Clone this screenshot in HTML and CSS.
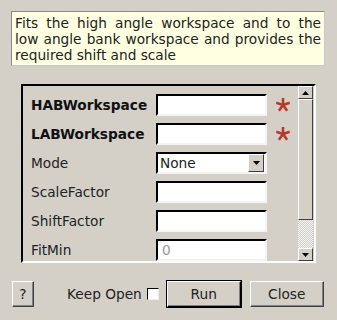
FILE: index.html
```html
<!DOCTYPE html>
<html lang="en">
<head>
    <meta charset="UTF-8">
    <title>Fit workspaces</title>
    <link rel="stylesheet" href="styles.css">
</head>
<body>
    <div class="dialog">
        <div class="description">Fits the high angle workspace and to the low angle bank workspace and provides the required shift and scale</div>

        <div class="props">
            <div class="rows">
                <label class="name req">HABWorkspace</label>
                <input class="field" type="text">
                <span class="star"><svg width="16" height="16" viewBox="0 0 16 16"><g stroke="#b8382b" stroke-width="2.6"><line x1="8" y1="8" x2="8" y2="1"/><line x1="8" y1="8" x2="14.7" y2="5.8"/><line x1="8" y1="8" x2="12.1" y2="13.7"/><line x1="8" y1="8" x2="3.9" y2="13.7"/><line x1="8" y1="8" x2="1.3" y2="5.8"/></g></svg></span>

                <label class="name req">LABWorkspace</label>
                <input class="field" type="text">
                <span class="star"><svg width="16" height="16" viewBox="0 0 16 16"><g stroke="#b8382b" stroke-width="2.6"><line x1="8" y1="8" x2="8" y2="1"/><line x1="8" y1="8" x2="14.7" y2="5.8"/><line x1="8" y1="8" x2="12.1" y2="13.7"/><line x1="8" y1="8" x2="3.9" y2="13.7"/><line x1="8" y1="8" x2="1.3" y2="5.8"/></g></svg></span>

                <label class="name">Mode</label>
                <div class="combo">
                    <span class="combo-text">None</span>
                    <span class="combo-btn"><svg width="7" height="4" viewBox="0 0 7 4"><polygon points="0,0 7,0 3.5,4" fill="#000"/></svg></span>
                </div>
                <span></span>

                <label class="name">ScaleFactor</label>
                <input class="field" type="text">
                <span></span>

                <label class="name">ShiftFactor</label>
                <input class="field" type="text">
                <span></span>

                <label class="name">FitMin</label>
                <input class="field" type="text" placeholder="0">
                <span></span>
            </div>

            <div class="scrollbar">
                <div class="sb-btn"><svg width="7" height="4" viewBox="0 0 7 4"><polygon points="3.5,0 7,4 0,4" fill="#000"/></svg></div>
                <div class="sb-thumb"></div>
                <div class="sb-track"></div>
                <div class="sb-btn"><svg width="7" height="4" viewBox="0 0 7 4"><polygon points="0,0 7,0 3.5,4" fill="#000"/></svg></div>
            </div>
        </div>

        <div class="buttons">
            <button class="btn help">?</button>
            <label class="keep">Keep Open <span class="check"></span></label>
            <button class="btn run">Run</button>
            <button class="btn close">Close</button>
        </div>
    </div>
</body>
</html>
```

FILE: styles.css
```css
body {
    margin: 0;
    background-color: #d4d0c8;
    font-family: "DejaVu Sans", sans-serif;
    font-size: 13.7px;
    color: #222;
}

.dialog {
    width: 337px;
    height: 320px;
    padding-top: 11px;
    box-sizing: border-box;
}

.description {
    margin-left: 11px;
    width: 314px;
    height: 55px;
    box-sizing: border-box;
    padding: 3px 3px 0 3px;
    background-color: #ffffe1;
    border: 1px solid #8a8a8a;
    border-right-color: #c8c8c8;
    border-bottom-color: #c8c8c8;
    line-height: 16px;
    text-align: justify;
}

.props {
    display: flex;
    margin: 18px 0 0 21px;
    width: 295px;
    height: 179px;
    box-sizing: border-box;
    border: 2px solid;
    border-color: #000 #fff #fff #000;
    overflow: hidden;
}

.rows {
    flex: 1;
    display: grid;
    grid-template-columns: 125px 111px 1fr;
    grid-auto-rows: 22px;
    row-gap: 7px;
    align-items: center;
    padding: 8px 0 0 8px;
}

.name {
    line-height: 22px;
}

.name.req {
    font-weight: bold;
    color: #111;
}

.field {
    width: 111px;
    height: 22px;
    box-sizing: border-box;
    margin: 0;
    padding: 0 4px;
    border: 2px solid;
    border-color: #000 #f4f4f4 #f4f4f4 #000;
    background-color: #fff;
    font-family: "DejaVu Sans", sans-serif;
    font-size: 13.7px;
}

.field::placeholder {
    color: #999;
}

.star {
    display: flex;
    padding-left: 8px;
}

.combo {
    display: flex;
    align-items: center;
    height: 22px;
    box-sizing: border-box;
    border: 2px solid;
    border-color: #000 #f4f4f4 #f4f4f4 #000;
    background-color: #fff;
}

.combo-text {
    flex: 1;
    padding-left: 2px;
}

.combo-btn {
    display: flex;
    align-items: center;
    justify-content: center;
    width: 14px;
    height: 16px;
    margin-right: 1px;
    background-color: #d4d0c8;
    border: 1px solid;
    border-color: #fff #404040 #404040 #fff;
}

.scrollbar {
    display: flex;
    flex-direction: column;
    width: 15px;
    padding-right: 1px;
}

.sb-btn {
    display: flex;
    align-items: center;
    justify-content: center;
    height: 13px;
    box-sizing: border-box;
    background-color: #d4d0c8;
    border: 1px solid;
    border-color: #fff #404040 #404040 #fff;
}

.sb-thumb {
    height: 121px;
    box-sizing: border-box;
    border: 1px solid;
    border-color: #fff #404040 #404040 #fff;
    background-color: #d4d0c8;
}

.sb-track {
    flex: 1;
    background: repeating-conic-gradient(#d4d0c8 0 25%, #f2f2f2 0 50%) 0 0 / 2px 2px;
}

.buttons {
    display: flex;
    align-items: center;
    margin-top: 17px;
    padding-left: 12px;
}

.btn {
    height: 26px;
    box-sizing: border-box;
    margin: 0;
    padding: 0;
    background-color: #d4d0c8;
    border: 1px solid;
    border-color: #fff #404040 #404040 #fff;
    box-shadow: inset -1px -1px #808080;
    font-family: "DejaVu Sans", sans-serif;
    font-size: 13.7px;
    color: #222;
}

.help {
    width: 22px;
}

.keep {
    display: flex;
    align-items: center;
    margin-left: 33px;
    gap: 5px;
}

.check {
    width: 12px;
    height: 12px;
    box-sizing: border-box;
    background-color: #fff;
    border: 1px solid;
    border-color: #000 #eee #eee #000;
}

.run {
    width: 76px;
    height: 28px;
    margin-left: 7px;
    outline: 1px solid #000;
    outline-offset: -1px;
    border: 2px solid;
    border-color: #fff #000 #000 #fff;
}

.close {
    width: 74px;
    margin-left: 8px;
}
```
